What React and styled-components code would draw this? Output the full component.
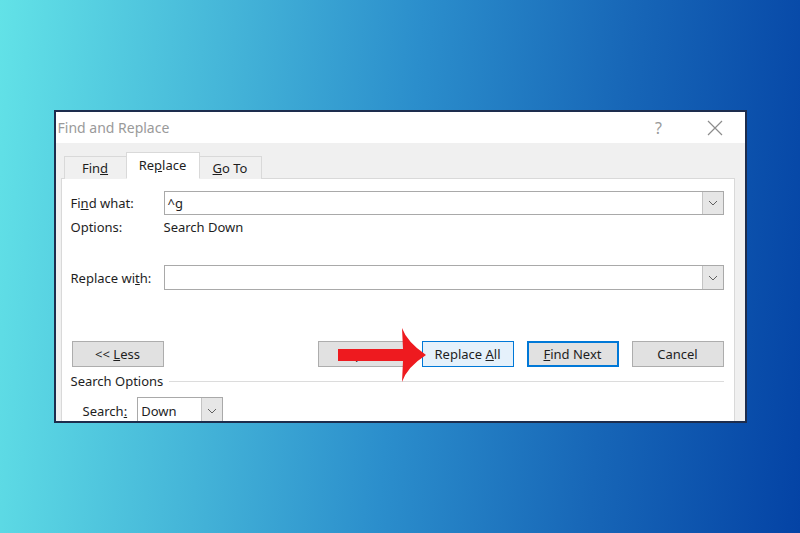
import React from "react";
import styled, { createGlobalStyle } from "styled-components";

const GlobalStyle = createGlobalStyle`
  html, body {
    margin: 0;
    padding: 0;
  }
  body {
    font-family: "Noto Sans", "Open Sans", sans-serif;
  }
`;

const Page = styled.div`
  width: 800px;
  height: 533px;
  display: flex;
  align-items: center;
  justify-content: center;
  background: linear-gradient(95deg, #62e2e7 0%, #44b4d8 28%, #2b8ecc 50%, #1766b7 75%, #0443a5 100%);
`;

const Dialog = styled.div`
  width: 689px;
  height: 309px;
  border: 2px solid #1d2d4d;
  background: #f0f0f0;
  display: flex;
  flex-direction: column;
  overflow: hidden;
  font-size: 13px;
  color: #1e1e1e;
`;

const TitleBar = styled.div`
  height: 31px;
  background: #fff;
  display: flex;
  align-items: center;
  padding: 0 7px 0 2px;
  flex-shrink: 0;
`;

const Title = styled.div`
  flex: 1;
  font-size: 14px;
  color: #9a9a9a;
`;

const TitleButton = styled.div`
  width: ${(p) => p.$w}px;
  display: flex;
  justify-content: center;
  color: #9a9a9a;
  font-size: 16px;
`;

const Body = styled.div`
  flex: 1;
  padding: 9px 10px 0 5px;
  display: flex;
  flex-direction: column;
`;

const Tabs = styled.div`
  display: flex;
  align-items: flex-end;
  padding-left: 3px;
  height: 27px;
  position: relative;
  z-index: 1;
`;

const Tab = styled.div`
  height: ${(p) => (p.$active ? 27 : 23)}px;
  padding: 0 ${(p) => (p.$active ? 10 : 9)}px;
  padding-bottom: ${(p) => (p.$active ? 2 : 0)}px;
  min-width: ${(p) => p.$w}px;
  box-sizing: border-box;
  display: flex;
  align-items: center;
  justify-content: center;
  background: ${(p) => (p.$active ? "#fff" : "#f0f0f0")};
  border: 1px solid #d9d9d9;
  border-bottom: ${(p) => (p.$active ? "1px solid #fff" : "none")};
  margin: 0 ${(p) => (p.$active ? -1 : 0)}px;
  position: relative;
  z-index: ${(p) => (p.$active ? 2 : 1)};
`;

const Panel = styled.div`
  flex: 1;
  background: #fff;
  border: 1px solid #d9d9d9;
  margin-top: -1px;
  padding: 12px 10px 0 9px;
  display: flex;
  flex-direction: column;
`;

const FieldRow = styled.div`
  display: grid;
  grid-template-columns: 93px 1fr;
  align-items: center;
  margin-bottom: ${(p) => p.$mb || 0}px;
`;

const Label = styled.div`
  white-space: nowrap;
`;

const Combo = styled.div`
  height: ${(p) => p.$h || 24}px;
  box-sizing: border-box;
  border: 1px solid #a9a9a9;
  display: flex;
  align-items: stretch;
  background: #fff;
  width: ${(p) => (p.$w ? `${p.$w}px` : "auto")};
`;

const ComboText = styled.div`
  flex: 1;
  display: flex;
  align-items: center;
  padding-left: 3px;
`;

const ComboArrow = styled.div`
  width: 20px;
  background: #e6e6e6;
  border-left: 1px solid #c4c4c4;
  display: flex;
  align-items: center;
  justify-content: center;
`;

const ButtonRow = styled.div`
  display: flex;
  align-items: center;
  margin-top: 51px;
  position: relative;
`;

const Button = styled.div`
  width: 92px;
  height: 26px;
  box-sizing: border-box;
  display: flex;
  align-items: center;
  justify-content: center;
  background: ${(p) => (p.$hot ? "#e5f1fb" : "#e1e1e1")};
  border: ${(p) => (p.$default ? 2 : 1)}px solid
    ${(p) => (p.$hot || p.$default ? "#0078d7" : "#adadad")};
  margin-left: ${(p) => p.$ml || 0}px;
`;

const GroupHeader = styled.div`
  display: flex;
  align-items: center;
  gap: 6px;
  margin-top: 5px;
  height: 18px;
`;

const GroupLine = styled.div`
  flex: 1;
  height: 1px;
  background: #dcdcdc;
`;

const SearchRow = styled.div`
  display: flex;
  align-items: center;
  gap: 10px;
  padding-left: 12px;
  margin-top: 7px;
`;

const Arrow = styled.svg`
  position: absolute;
  left: 258px;
  top: -17px;
  pointer-events: none;
`;

function Chevron() {
  return (
    <svg width="10" height="6" viewBox="0 0 10 6">
      <path d="M1 1 L5 5 L9 1" fill="none" stroke="#606060" strokeWidth="1" />
    </svg>
  );
}

function Close() {
  return (
    <svg width="16" height="16" viewBox="0 0 16 16">
      <path d="M1 1 L15 15 M15 1 L1 15" stroke="#8c8c8c" strokeWidth="1.2" />
    </svg>
  );
}

export default function App() {
  return (
    <>
      <GlobalStyle />
      <Page>
        <Dialog>
          <TitleBar>
            <Title>Find and Replace</Title>
            <TitleButton $w={66}>?</TitleButton>
            <TitleButton $w={46}>
              <Close />
            </TitleButton>
          </TitleBar>
          <Body>
            <Tabs>
              <Tab $w={63}>
                Fin<u>d</u>
              </Tab>
              <Tab $active $w={74}>
                Re<u>p</u>lace
              </Tab>
              <Tab $w={63}>
                <u>G</u>o To
              </Tab>
            </Tabs>
            <Panel>
              <FieldRow $mb={3}>
                <Label>
                  Fi<u>n</u>d what:
                </Label>
                <Combo>
                  <ComboText>^g</ComboText>
                  <ComboArrow>
                    <Chevron />
                  </ComboArrow>
                </Combo>
              </FieldRow>
              <FieldRow $mb={29}>
                <Label>Options:</Label>
                <div>Search Down</div>
              </FieldRow>
              <FieldRow>
                <Label>
                  Replace wi<u>t</u>h:
                </Label>
                <Combo $h={25}>
                  <ComboText />
                  <ComboArrow>
                    <Chevron />
                  </ComboArrow>
                </Combo>
              </FieldRow>
              <ButtonRow>
                <Button $ml={1}>
                  &lt;&lt;&nbsp;<u>L</u>ess
                </Button>
                <Button $ml={154}>
                  <u>R</u>eplace
                </Button>
                <Button $ml={12} $hot>
                  Replace&nbsp;<u>A</u>ll
                </Button>
                <Button $ml={13} $default>
                  <u>F</u>ind Next
                </Button>
                <Button $ml={13}>Cancel</Button>
                <Arrow width="100" height="62" viewBox="0 0 100 62">
                  <path
                    d="M9 25 L74 25 L73 4 Q78 18 97 31 Q78 43 73 58 L74 37 L9 37 Z"
                    fill="#ee1a1f"
                  />
                </Arrow>
              </ButtonRow>
              <GroupHeader>
                Search Options
                <GroupLine />
              </GroupHeader>
              <SearchRow>
                <span>
                  Search<u>:</u>
                </span>
                <Combo $w={86} $h={27}>
                  <ComboText>Down</ComboText>
                  <ComboArrow>
                    <Chevron />
                  </ComboArrow>
                </Combo>
              </SearchRow>
            </Panel>
          </Body>
        </Dialog>
      </Page>
    </>
  );
}
